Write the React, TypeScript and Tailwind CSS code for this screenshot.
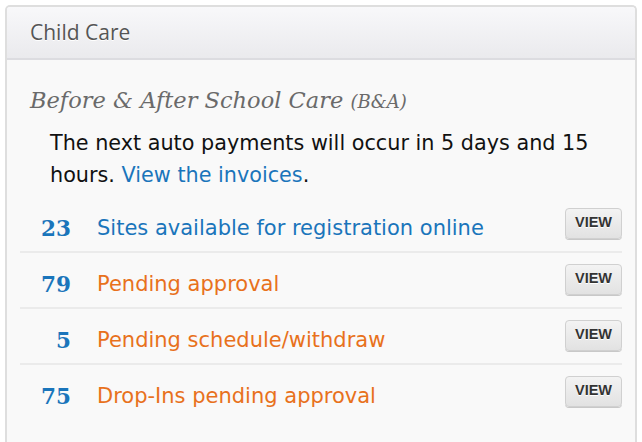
const rows = [
  { count: 23, label: 'Sites available for registration online', blue: true },
  { count: 79, label: 'Pending approval' },
  { count: 5, label: 'Pending schedule/withdraw' },
  { count: 75, label: 'Drop-Ins pending approval' },
]

export default function App() {
  return (
    <div className="min-h-[442px] bg-white pt-[5px] pl-[5px] pr-[5px]">
      <div className="overflow-hidden rounded-t-[5px] border-2 border-b-0 border-[#dedede] bg-[#f9f9f9]">
        <div className="flex h-[53px] items-center border-b-2 border-[#dcdce0] bg-gradient-to-b from-[#f8f8fa] to-[#eaeaed] px-[23px]">
          <h2 className="font-['Open_Sans','DejaVu_Sans',sans-serif] text-[21px] text-[#555] [text-shadow:0_1px_0_#fff]">
            Child Care
          </h2>
        </div>
        <div className="pb-6 pl-[23px] pr-[13px] pt-[24px] font-['DejaVu_Sans',sans-serif]">
          <h3 className="font-['DejaVu_Serif',serif] text-[22.5px] italic text-[#6a6a6a]">
            Before &amp; After School Care <span className="text-[18px]">(B&amp;A)</span>
          </h3>
          <p className="mt-[9px] pl-5 pr-[20px] text-[20.75px] leading-[32px] text-[#111]">
            The next auto payments will occur in 5 days and 15 hours.{' '}
            <a className="text-[#1a75bb]">View the invoices</a>.
          </p>
          <ul className="mt-[6px]">
            {rows.map((r, i) => (
              <li
                key={r.count}
                className={`-ml-[10px] flex h-[56px] items-start pt-[11px] ${i < rows.length - 1 ? 'border-b-2 border-[#ebebeb]' : ''}`}
              >
                <span className="mt-[5px] w-[51px] text-right font-['DejaVu_Serif',serif] text-[21.5px] font-bold leading-[31px] text-[#1a75bb]">
                  {r.count}
                </span>
                <span className={`ml-[26px] mt-[5px] flex-1 text-[21px] leading-[31px] ${r.blue ? 'text-[#1a75bb]' : 'text-[#e8711c]'}`}>
                  {r.label}
                </span>
                <button className="h-[31px] w-[57px] rounded-[4px] border border-[#d0d0d0] bg-gradient-to-b from-[#f3f3f3] to-[#e2e2e2] font-['Liberation_Sans',sans-serif] text-[14.5px] font-bold text-[#333] shadow-[0_1px_0_#c8c8c8] [text-shadow:0_1px_0_#fff]">
                  VIEW
                </button>
              </li>
            ))}
          </ul>
        </div>
      </div>
    </div>
  )
}
